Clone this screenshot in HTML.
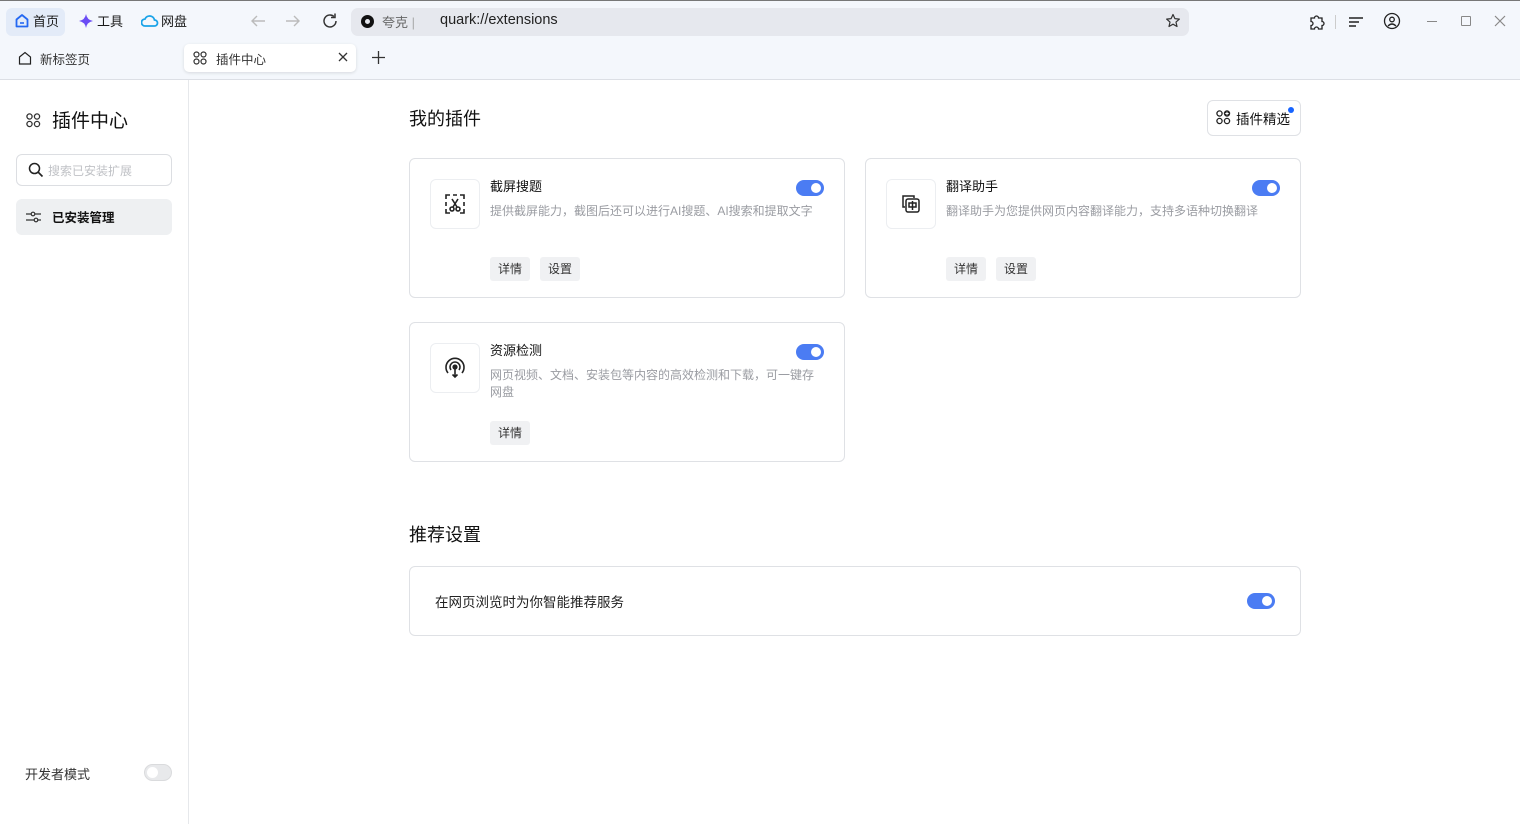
<!DOCTYPE html>
<html><head><meta charset="utf-8"><style>
*{box-sizing:border-box;margin:0;padding:0}
body{width:1520px;height:824px;overflow:hidden;background:#fff;font-family:"Liberation Sans","Noto Sans CJK SC",sans-serif;color:#1a1a1a;position:relative}
.abs{position:absolute}
.top{left:0;top:0;width:1520px;height:80px;background:#f4f7fc;border-top:1px solid #777;border-bottom:1px solid #dcdfe5}
.tg{display:inline-block;width:28px;height:16px;border-radius:8px;background:#4b7cf3;position:absolute}
.tg:after{content:"";position:absolute;right:3px;top:3px;width:10px;height:10px;border-radius:50%;background:#fff}
.card{position:absolute;border:1px solid #dfe1e5;border-radius:6px;background:#fff}
.ic{position:absolute;left:20px;top:20px;width:50px;height:50px;border:1px solid #eceef1;border-radius:6px;display:flex;align-items:center;justify-content:center}
.t{position:absolute;left:80px;top:17px;font-size:13px;color:#111}
.d{position:absolute;left:80px;top:44px;font-size:12px;color:#9a9ca2;line-height:17px;width:330px}
.b{position:absolute;top:98px;height:24px;line-height:24px;padding:0 8px;background:#f0f1f3;border-radius:3px;font-size:12px;color:#333}
</style></head><body>
<div class="abs top">
 <div class="abs" style="left:6px;top:7px;width:59px;height:28px;background:#e3ebf8;border-radius:6px"></div>
 <svg class="abs" style="left:14px;top:12px" width="16" height="16" viewBox="0 0 16 16"><path d="M2.5 6.5L8 2l5.5 4.5V13.5H2.5Z" fill="none" stroke="#2468f2" stroke-width="1.8" stroke-linejoin="round"/><path d="M6 10h4" stroke="#2468f2" stroke-width="1.6"/></svg>
 <div class="abs" style="left:33px;top:10px;font-size:13px">首页</div>
 <svg class="abs" style="left:78px;top:12px" width="16" height="16" viewBox="0 0 16 16"><path d="M8 1Q9 7 15 8Q9 9 8 15Q7 9 1 8Q7 7 8 1Z" fill="#6a4cf5"/></svg>
 <div class="abs" style="left:97px;top:10px;font-size:13px">工具</div>
 <svg class="abs" style="left:141px;top:12px" width="18" height="16" viewBox="0 0 18 16"><path d="M4 13a3.5 3.5 0 0 1 0-7a5 5 0 0 1 9.5 1a3 3 0 0 1 0 6Z" fill="none" stroke="#1aa3e8" stroke-width="1.8"/></svg>
 <div class="abs" style="left:161px;top:10px;font-size:13px">网盘</div>
 <svg class="abs" style="left:250px;top:13px" width="16" height="14"><path d="M15 7H2M7 2L2 7l5 5" fill="none" stroke="#bbb" stroke-width="1.4"/></svg>
 <svg class="abs" style="left:285px;top:13px" width="16" height="14"><path d="M1 7h13M9 2l5 5-5 5" fill="none" stroke="#bbb" stroke-width="1.4"/></svg>
 <svg class="abs" style="left:321px;top:11px" width="18" height="18" viewBox="0 0 18 18"><path d="M15 9a6 6 0 1 1-2-4.5" fill="none" stroke="#333" stroke-width="1.5"/><path d="M14 1.5v4h-4" fill="none" stroke="#333" stroke-width="1.5"/></svg>
 <div class="abs" style="left:351px;top:7px;width:838px;height:28px;background:#e6e8ee;border-radius:7px"></div>
 <div class="abs" style="left:361px;top:14px;width:13px;height:13px;border-radius:50%;border:4px solid #111"></div>
 <div class="abs" style="left:382px;top:11px;font-size:13px;color:#666">夸克 <span style="color:#aaa">|</span></div>
 <div class="abs" style="left:440px;top:11px;font-size:14.5px;color:#222">quark://extensions</div>
 <svg class="abs" style="left:1165px;top:12px" width="16" height="16" viewBox="0 0 16 16"><path d="M8 1.5l1.9 4.1 4.5.5-3.4 3 1 4.4L8 11.2 4 13.5l1-4.4-3.4-3 4.5-.5Z" fill="none" stroke="#333" stroke-width="1.2" stroke-linejoin="round"/></svg>
 <svg class="abs" style="left:1308px;top:12px" width="18" height="18" viewBox="0 0 18 18"><path d="M3 5h3.5a2 2 0 1 1 4 0H14v3.5a2 2 0 1 1 0 4V16H10.5a2 2 0 1 0-4 0H3v-3.5a2 2 0 1 0 0-4Z" fill="none" stroke="#222" stroke-width="1.3"/></svg>
 <div class="abs" style="left:1335px;top:14px;width:1px;height:14px;background:#ccc"></div>
 <svg class="abs" style="left:1348px;top:14px" width="16" height="14"><path d="M1 3h14M1 7h10M1 11h7" stroke="#222" stroke-width="1.5"/></svg>
 <svg class="abs" style="left:1383px;top:11px" width="18" height="18"><circle cx="9" cy="9" r="7.5" fill="none" stroke="#222" stroke-width="1.3"/><circle cx="9" cy="7.5" r="2.3" fill="none" stroke="#222" stroke-width="1.3"/><path d="M5 14q4-4 8 0" fill="none" stroke="#222" stroke-width="1.3"/></svg>
 <div class="abs" style="left:1427px;top:20px;width:10px;height:1px;background:#888"></div>
 <div class="abs" style="left:1461px;top:15px;width:10px;height:10px;border:1px solid #888;border-radius:1px"></div>
 <svg class="abs" style="left:1494px;top:14px" width="12" height="12"><path d="M1 1l10 10M11 1L1 11" stroke="#888" stroke-width="1.2"/></svg>
 <svg class="abs" style="left:18px;top:50px" width="14" height="14"><path d="M1.5 6L7 1.5 12.5 6V13H1.5Z" fill="none" stroke="#222" stroke-width="1.2"/></svg>
 <div class="abs" style="left:40px;top:48px;font-size:12.5px;color:#333">新标签页</div>
 <div class="abs" style="left:184px;top:43px;width:172px;height:28px;background:#fff;border-radius:5px;box-shadow:0 1px 3px rgba(0,0,0,.12)"></div>
 <svg class="abs" style="left:193px;top:50px" width="14" height="14"><g fill="none" stroke="#333" stroke-width="1.2"><circle cx="3.5" cy="3.5" r="2.5"/><circle cx="10.5" cy="3.5" r="2.5"/><circle cx="3.5" cy="10.5" r="2.5"/><circle cx="10.5" cy="10.5" r="2.5"/></g></svg>
 <div class="abs" style="left:216px;top:48px;font-size:12.5px;color:#333">插件中心</div>
 <svg class="abs" style="left:338px;top:51px" width="10" height="10"><path d="M1 1l8 8M9 1L1 9" stroke="#333" stroke-width="1.3"/></svg>
 <svg class="abs" style="left:372px;top:50px" width="13" height="13"><path d="M6.5 0v13M0 6.5h13" stroke="#333" stroke-width="1.3"/></svg>
</div>
<div class="abs" style="left:188px;top:80px;width:1px;height:744px;background:#e6e8eb"></div>
<svg class="abs" style="left:26px;top:113px" width="15" height="15"><g fill="none" stroke="#333" stroke-width="1.3"><circle cx="3.5" cy="3.5" r="2.6"/><circle cx="11" cy="3.5" r="2.6"/><circle cx="3.5" cy="11" r="2.6"/><circle cx="11" cy="11" r="2.6"/></g></svg>
<div class="abs" style="left:52px;top:106px;font-size:19px;color:#111">插件中心</div>
<div class="abs" style="left:16px;top:154px;width:156px;height:32px;border:1px solid #dcdee2;border-radius:6px"></div>
<svg class="abs" style="left:28px;top:162px" width="16" height="16"><circle cx="6.5" cy="6.5" r="5" fill="none" stroke="#222" stroke-width="1.5"/><path d="M10 10l4.5 4.5" stroke="#222" stroke-width="1.6"/></svg>
<div class="abs" style="left:48px;top:162px;font-size:12px;color:#c0c2c6">搜索已安装扩展</div>
<div class="abs" style="left:16px;top:199px;width:156px;height:36px;background:#eef0f2;border-radius:6px"></div>
<svg class="abs" style="left:26px;top:211px" width="15" height="12"><path d="M0 3h5M9 3h6M0 9h8M12 9h3" stroke="#333" stroke-width="1.2"/><circle cx="7" cy="3" r="1.8" fill="none" stroke="#333" stroke-width="1.2"/><circle cx="10" cy="9" r="1.8" fill="none" stroke="#333" stroke-width="1.2"/></svg>
<div class="abs" style="left:52px;top:207px;font-size:12.5px;font-weight:bold;color:#111">已安装管理</div>
<div class="abs" style="left:25px;top:764px;font-size:13px;color:#333">开发者模式</div>
<div class="abs" style="left:144px;top:764px;width:28px;height:17px;border-radius:9px;background:#e8e9eb;border:1px solid #dadbdd"><div style="position:absolute;left:2px;top:2px;width:11px;height:11px;border-radius:50%;background:#fff"></div></div>

<div class="abs" style="left:409px;top:105px;font-size:18px;color:#111">我的插件</div>
<div class="abs" style="left:1207px;top:100px;width:94px;height:36px;border:1px solid #dfe1e5;border-radius:6px"></div>
<svg class="abs" style="left:1216px;top:110px" width="15" height="15"><g fill="none" stroke="#222" stroke-width="1.3"><circle cx="3.5" cy="3.5" r="2.6"/><circle cx="3.5" cy="11" r="2.6"/><circle cx="11" cy="11" r="2.6"/></g><circle cx="11" cy="3.5" r="3.2" fill="#222"/><path d="M9.3 3.5h3.4M11 1.8v3.4" stroke="#fff" stroke-width="1"/></svg>
<div class="abs" style="left:1236px;top:108px;font-size:13.5px;color:#111">插件精选</div>
<div class="abs" style="left:1288px;top:107px;width:6px;height:6px;border-radius:50%;background:#1764ff"></div>

<div class="card" style="left:409px;top:158px;width:436px;height:140px">
 <div class="ic"><svg width="24" height="24" viewBox="0 0 24 24" fill="none" stroke="#222" stroke-width="1.6"><path d="M3 7V3h4M17 3h4v4M21 17v4h-4M7 21H3v-4" /><path d="M10 3h4M3 10v4M21 10v4" /><circle cx="9" cy="17" r="2"/><circle cx="15" cy="17" r="2"/><path d="M9 7l5 8M15 7l-5 8"/></svg></div>
 <div class="t">截屏搜题</div><span class="tg" style="left:386px;top:21px"></span>
 <div class="d">提供截屏能力，截图后还可以进行AI搜题、AI搜索和提取文字</div>
 <div class="b" style="left:80px">详情</div><div class="b" style="left:130px">设置</div>
</div>
<div class="card" style="left:865px;top:158px;width:436px;height:140px">
 <div class="ic"><svg width="24" height="24" viewBox="0 0 24 24" fill="none" stroke="#222" stroke-width="1.5"><path d="M6 15H4V4h11v2"/><rect x="7" y="7" width="13" height="13" rx="2"/><path d="M10 11h7v4h-7zM13.5 9v9"/></svg></div>
 <div class="t">翻译助手</div><span class="tg" style="left:386px;top:21px"></span>
 <div class="d">翻译助手为您提供网页内容翻译能力，支持多语种切换翻译</div>
 <div class="b" style="left:80px">详情</div><div class="b" style="left:130px">设置</div>
</div>
<div class="card" style="left:409px;top:322px;width:436px;height:140px">
 <div class="ic"><svg width="26" height="26" viewBox="0 0 26 26" fill="none" stroke="#222" stroke-width="1.6"><path d="M6 18a9 9 0 1 1 14 0"/><path d="M9 15a5 5 0 1 1 8 0"/><circle cx="13" cy="12" r="1.8" fill="#222"/><path d="M13 13v9M10.5 19.5L13 22l2.5-2.5"/></svg></div>
 <div class="t">资源检测</div><span class="tg" style="left:386px;top:21px"></span>
 <div class="d" style="width:328px">网页视频、文档、安装包等内容的高效检测和下载，可一键存网盘</div>
 <div class="b" style="left:80px">详情</div>
</div>

<div class="abs" style="left:409px;top:521px;font-size:18px;color:#111">推荐设置</div>
<div class="card" style="left:409px;top:566px;width:892px;height:70px">
 <div class="abs" style="left:25px;top:24px;font-size:13.5px;color:#222">在网页浏览时为你智能推荐服务</div>
 <span class="tg" style="left:837px;top:26px"></span>
</div>
</body></html>
